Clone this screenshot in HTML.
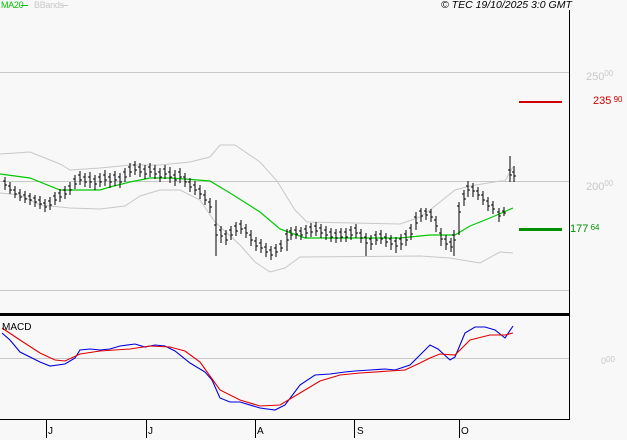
<!DOCTYPE html>
<html><head><meta charset="utf-8"><style>
html,body{margin:0;padding:0;background:#f8f8f8;}
body{width:627px;height:440px;overflow:hidden;position:relative;font-family:"Liberation Sans",sans-serif;}
.t{position:absolute;font-size:10px;white-space:nowrap;}
</style></head><body>
<svg width="627" height="440" style="position:absolute;left:0;top:0" xmlns="http://www.w3.org/2000/svg">
<rect width="627" height="440" fill="#f8f8f8"/>
<g stroke="#c8c8c8" stroke-width="1" fill="none">
<path d="M0,72.5H569M0,181.5H569M0,290.5H569M0,358.5H569"/>
<polyline points="0,154 30,152 60,164 70,170 100,168 130,165 160,165 190,162 210,157 220,145 235,145 260,162 277,181 295,210 307,222 400,224 420,217 430,210 445,198 455,190 470,186 500,181 505,181 510,172 513,167"/>
<polyline points="0,193 20,195 40,205 70,208 100,209 125,206 140,196 160,190 180,190 200,200 215,222 240,245 255,262 270,272 285,268 300,257 420,256 450,258 480,263 500,252 513,253"/>
</g>
<polyline fill="none" stroke="#00c800" stroke-width="1.2" points="0,174 30,178 60,190 70,190 100,190 110,187 130,182 150,178 170,178 185,179 210,181 230,193 260,212 280,229 305,238 400,238 430,235 455,235 470,226 490,218 513,208"/>
<path fill="none" stroke="#000" stroke-width="1" d="
M5,177V190M3,181h2M5,185h2
M10,182V194M8,186h2M10,190h2
M15,186V198M13,190h2M15,194h2
M20,189V201M18,193h2M20,197h2
M25,191V203M23,195h2M25,199h2
M30,193V205M28,196h2M30,200h2
M35,195V207M33,198h2M35,202h2
M40,196V209M38,200h2M40,204h2
M45,199V212M43,203h2M45,207h2
M50,197V210M48,201h2M50,205h2
M55,192V205M53,196h2M55,200h2
M60,189V202M58,193h2M60,197h2
M65,186V199M63,190h2M65,194h2
M70,182V195M68,186h2M70,190h2
M75,175V189M73,179h2M75,184h2
M80,171V185M78,175h2M80,180h2
M85,173V187M83,177h2M85,182h2
M90,172V188M88,177h2M90,182h2
M95,175V190M93,179h2M95,184h2
M100,173V187M98,177h2M100,182h2
M105,170V186M103,175h2M105,180h2
M110,173V188M108,177h2M110,182h2
M115,171V186M113,175h2M115,180h2
M120,173V188M118,177h2M120,182h2
M125,168V182M123,172h2M125,177h2
M130,163V177M128,167h2M130,172h2
M135,161V175M133,165h2M135,170h2
M140,163V177M138,167h2M140,172h2
M145,165V179M143,169h2M145,174h2
M150,163V177M148,167h2M150,172h2
M155,165V179M153,169h2M155,174h2
M160,168V182M158,172h2M160,177h2
M165,165V179M163,169h2M165,174h2
M170,167V183M168,172h2M170,177h2
M175,170V186M173,175h2M175,180h2
M180,168V183M178,172h2M180,177h2
M185,173V187M183,177h2M185,182h2
M190,178V192M188,182h2M190,187h2
M195,181V195M193,185h2M195,190h2
M200,185V199M198,189h2M200,194h2
M205,190V205M203,195h2M205,200h2
M210,198V213M208,202h2M210,207h2
M216,200V256M214,225h2M216,235h2
M221,226V243M219,230h2M221,236h2
M226,230V245M224,234h2M226,240h2
M231,226V240M229,230h2M231,235h2
M236,222V236M234,226h2M236,231h2
M241,220V234M239,224h2M241,229h2
M246,224V238M244,228h2M246,233h2
M251,230V246M249,235h2M251,240h2
M256,237V251M254,241h2M256,246h2
M261,239V253M259,243h2M261,248h2
M266,243V257M264,247h2M266,252h2
M271,246V260M269,250h2M271,255h2
M276,244V257M274,248h2M276,252h2
M281,240V252M279,244h2M281,248h2
M287,229V251M285,234h2M287,240h2
M291,227V240M289,231h2M291,235h2
M296,226V239M294,230h2M296,234h2
M301,227V240M299,231h2M301,235h2
M306,225V238M304,229h2M306,233h2
M311,223V237M309,227h2M311,232h2
M316,222V236M314,226h2M316,231h2
M321,224V238M319,228h2M321,233h2
M326,226V240M324,230h2M326,235h2
M331,228V242M329,232h2M331,237h2
M336,229V243M334,233h2M336,238h2
M341,228V242M339,232h2M341,237h2
M346,228V242M344,232h2M346,237h2
M351,226V240M349,230h2M351,235h2
M356,224V238M354,228h2M356,233h2
M361,229V243M359,233h2M361,238h2
M366,233V256M364,237h2M366,243h2
M371,235V250M369,239h2M371,244h2
M376,231V245M374,235h2M376,240h2
M381,230V244M379,234h2M381,239h2
M386,233V247M384,237h2M386,242h2
M391,235V250M389,239h2M391,244h2
M396,237V253M394,241h2M396,246h2
M401,234V250M399,239h2M401,244h2
M406,230V246M404,234h2M406,240h2
M411,224V240M409,228h2M411,234h2
M416,212V230M414,217h2M416,223h2
M421,208V222M419,211h2M421,216h2
M426,208V220M424,211h2M426,215h2
M431,209V222M429,212h2M431,217h2
M436,216V232M434,220h2M436,226h2
M441,228V246M439,233h2M441,239h2
M446,235V250M444,239h2M446,244h2
M451,238V252M449,242h2M451,247h2
M454,230V256M452,235h2M454,240h2
M459,202V235M457,206h2M459,212h2
M464,190V206M462,194h2M464,199h2
M468,181V197M466,186h2M468,190h2
M473,183V197M471,187h2M473,191h2
M478,187V200M476,191h2M478,195h2
M483,191V205M481,195h2M483,200h2
M488,197V211M486,201h2M488,206h2
M493,201V214M491,205h2M493,209h2
M499,208V222M497,212h2M499,216h2
M504,207V216M502,211h2M504,213h2
M510,156V182M508,170h2M510,175h2
M514,166V182M512,172h2M514,176h2"/>
<polyline fill="none" stroke="#0000e0" stroke-width="1.1" points="2,333 10,340 20,352 40,362 50,366 65,364 75,358 80,350 90,349 100,350 110,349 120,346 135,344 145,347 155,345 165,346 175,351 190,363 205,372 212,380 220,398 230,402 240,402 260,408 275,410 285,405 300,385 315,375 330,374 345,372 355,371 370,370 385,369 395,370 410,365 420,355 430,345 438,349 450,360 455,357 465,333 475,327 485,327 495,330 505,338 513,326"/>
<polyline fill="none" stroke="#e00000" stroke-width="1.1" points="2,328 20,340 40,353 55,360 65,361 80,354 100,351 130,349 150,346 170,347 185,351 200,362 220,390 240,400 260,406 280,405 300,393 320,381 340,375 360,373 390,371 405,370 420,363 430,358 440,354 455,355 470,340 490,335 505,335 513,333"/>
<rect x="0" y="313" width="569" height="3" fill="#000"/>
<path d="M569.5,10V419M0,419.5H570" stroke="#000" stroke-width="1" fill="none"/>
<path d="M46.5,420V438M146.5,420V438M255.5,420V438M354.5,420V438M459.5,420V438" stroke="#000" stroke-width="1"/>
<rect x="519" y="101" width="43" height="2" fill="#d00000"/>
<rect x="519" y="228" width="43" height="3" fill="#009000"/>
<line x1="21" y1="5.5" x2="28" y2="5.5" stroke="#00c800"/>
<line x1="61" y1="5.5" x2="68" y2="5.5" stroke="#c8c8c8"/>
</svg>
<div class="t" style="left:1px;top:0;color:#00c000;font-size:9px;letter-spacing:-0.3px;">MA20</div>
<div class="t" style="left:34px;top:0;color:#c8c8c8;font-size:9px;letter-spacing:-0.3px;">BBands</div>
<div class="t" style="left:441px;top:-1px;color:#000;font-style:italic;font-size:10.5px;">© TEC 19/10/2025 3:0 GMT</div>
<div class="t" style="left:586px;top:69px;color:#c8c8c8;font-size:11px;">250<span style="font-size:8px;vertical-align:4px;">00</span></div>
<div class="t" style="left:586px;top:179px;color:#c8c8c8;font-size:11px;">200<span style="font-size:8px;vertical-align:4px;">00</span></div>
<div class="t" style="left:593px;top:95px;color:#d00000;font-size:11px;">235<span style="font-size:8px;vertical-align:2px;"> 90</span></div>
<div class="t" style="left:570px;top:223px;color:#009000;font-size:11px;">177<span style="font-size:8px;vertical-align:2px;"> 64</span></div>
<div class="t" style="left:601px;top:355px;color:#c8c8c8;font-size:9px;">0<span style="font-size:8px;vertical-align:2px;">00</span></div>
<div class="t" style="left:2px;top:322px;color:#000;">MACD</div>
<div class="t" style="left:48px;top:426px;color:#000;">J</div>
<div class="t" style="left:148px;top:426px;color:#000;">J</div>
<div class="t" style="left:257px;top:426px;color:#000;">A</div>
<div class="t" style="left:357px;top:426px;color:#000;">S</div>
<div class="t" style="left:461px;top:426px;color:#000;">O</div>
</body></html>
